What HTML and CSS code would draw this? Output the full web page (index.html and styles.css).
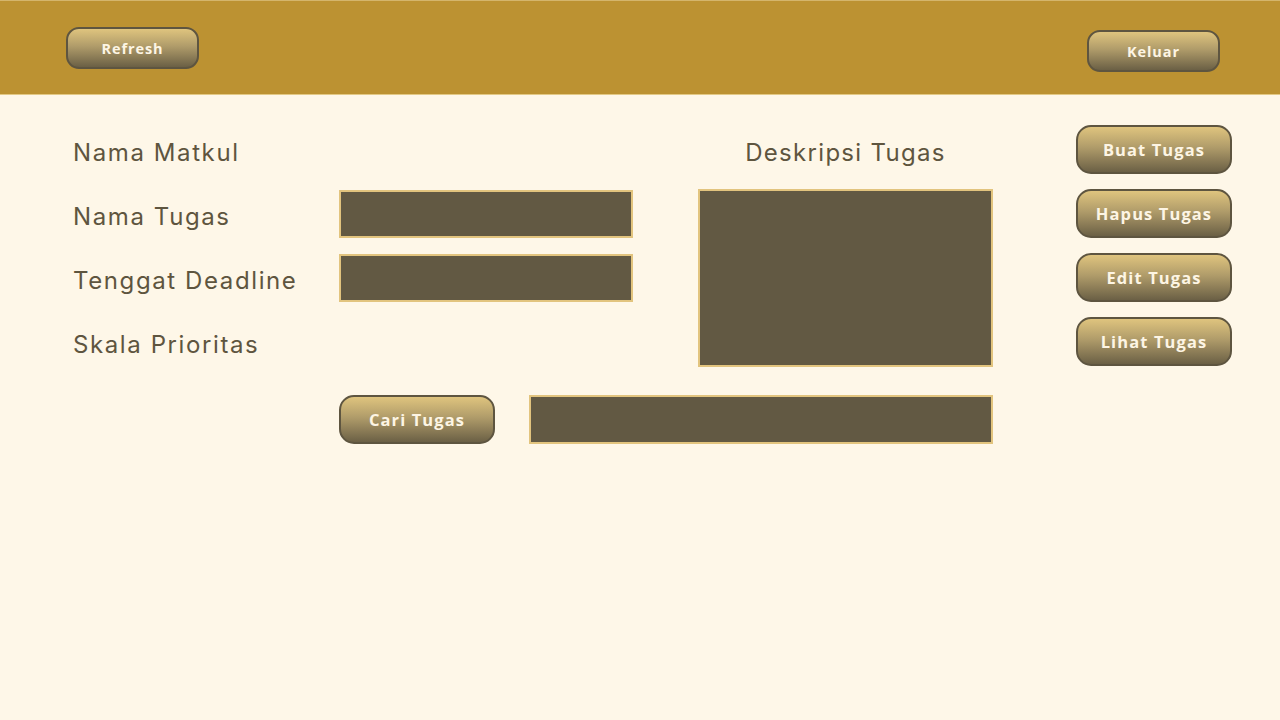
FILE: index.html
```html
<!DOCTYPE html>
<html lang="id">
<head>
<meta charset="utf-8">
<title>Tugas</title>
<link rel="stylesheet" href="styles.css">
</head>
<body>
<header class="topbar">
  <button class="btn btn-sm">Refresh</button>
  <button class="btn btn-sm btn-exit">Keluar</button>
</header>
<main class="form">
  <div class="label r1">Nama Matkul</div>
  <div class="label r2">Nama Tugas</div>
  <div class="field c2 r2"></div>
  <div class="label r3">Tenggat Deadline</div>
  <div class="field c2 r3"></div>
  <div class="label r4">Skala Prioritas</div>
  <div class="desc-title">Deskripsi Tugas</div>
  <div class="field desc"></div>
  <div class="actions">
    <button class="btn btn-lg">Buat Tugas</button>
    <button class="btn btn-lg">Hapus Tugas</button>
    <button class="btn btn-lg">Edit Tugas</button>
    <button class="btn btn-lg">Lihat Tugas</button>
  </div>
  <div class="search">
    <button class="btn btn-lg">Cari Tugas</button>
    <div class="field search-input"></div>
  </div>
</main>
</body>
</html>
```
FILE: styles.css
```css
* { box-sizing: border-box; }
html, body { margin: 0; padding: 0; }
body {
  width: 1280px;
  height: 720px;
  background: #fef7e8;
  font-family: "Inter", "Open Sans", sans-serif;
  overflow: hidden;
}
.topbar {
  height: 95px;
  background: #bc9232;
  border-top: 1px solid #d4b56c;
  border-bottom: 1px solid #e3c985;
  display: flex;
  justify-content: space-between;
  align-items: flex-start;
  padding: 26px 60px 0 66px;
}
.btn {
  font-family: "Open Sans", "Inter", sans-serif;
  font-weight: 700;
  color: #fdf5e4;
  background: linear-gradient(to bottom, #dfc47e 0%, #b09c6a 45%, #6b6045 100%);
  border: 2px solid #5e5540;
  border-radius: 14px;
  padding: 0;
  cursor: pointer;
}
.btn-sm {
  width: 133px;
  height: 42px;
  font-size: 14.5px;
  letter-spacing: 0.9px;
  border-radius: 13px;
}
.btn-exit { margin-top: 3px; }
.btn-lg {
  width: 156px;
  height: 49px;
  font-size: 16.5px;
  letter-spacing: 1.1px;
  border-radius: 15px;
}
.form {
  display: grid;
  grid-template-columns: 266px 294px 65px 295px 83px 157px;
  grid-template-rows: repeat(4, 48px) 49px;
  row-gap: 16px;
  padding: 31px 0 0 73px;
}
.label {
  grid-column: 1;
  align-self: center;
  font-size: 24px;
  color: #5e553f;
  letter-spacing: 1.6px;
  padding-top: 4px;
  white-space: nowrap;
}
.r1 { grid-row: 1; }
.r2 { grid-row: 2; }
.r3 { grid-row: 3; }
.r4 { grid-row: 4; }
.c2 { grid-column: 2; }
.field {
  background: #625943;
  border: 2px solid #e2c47e;
}
.desc-title {
  grid-column: 4;
  grid-row: 1;
  align-self: center;
  text-align: center;
  font-size: 24px;
  color: #5e553f;
  letter-spacing: 1.3px;
  padding-top: 5px;
  white-space: nowrap;
}
.desc {
  grid-column: 4;
  grid-row: 2 / 5;
  margin-top: -1px;
  margin-bottom: -1px;
}
.actions {
  grid-column: 6;
  grid-row: 1 / 5;
  display: flex;
  flex-direction: column;
  gap: 15px;
  margin-top: -1px;
}
.search {
  grid-column: 2 / 5;
  grid-row: 5;
  margin-top: 13px;
  display: flex;
  gap: 34px;
}
.search-input {
  flex: 1;
  height: 49px;
}
```
